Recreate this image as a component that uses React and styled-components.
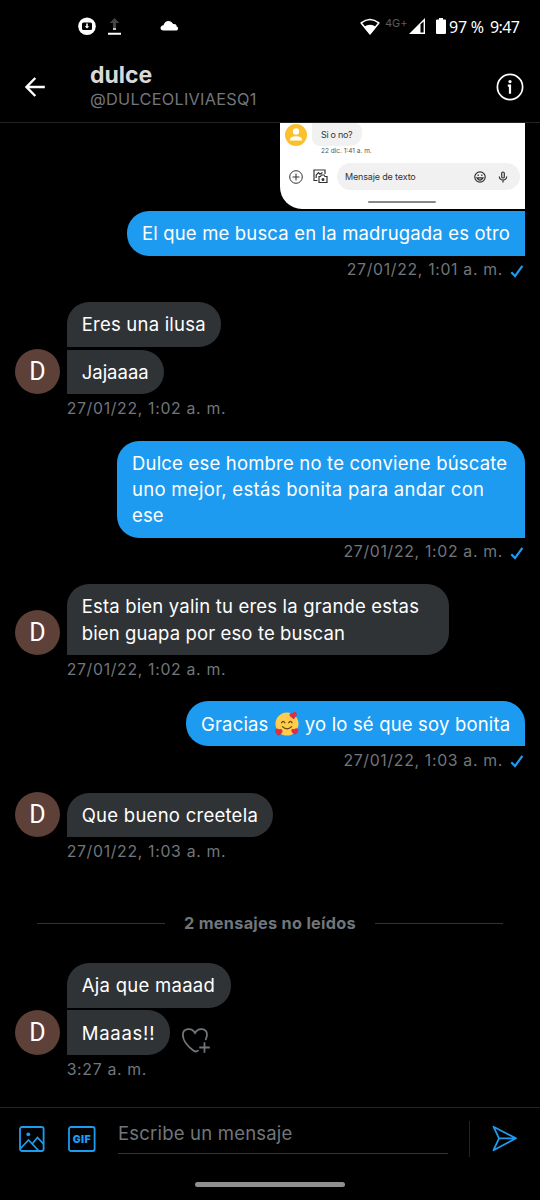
import React from "react";
import styled, { createGlobalStyle } from "styled-components";

// Data
const groups = [
  {
    id: 1,
    mine: true,
    attachment: true,
    time: "27/01/22, 1:01 a. m.",
    messages: [
      { lines: [{ text: "El que me busca en la madrugada es otro", track: 0.16 }], width: 398 },
    ],
  },
  {
    id: 2,
    time: "27/01/22, 1:02 a. m.",
    messages: [
      { lines: [{ text: "Eres una ilusa", track: 0.22 }], width: 154 },
      { lines: [{ text: "Jajaaaa", track: 0 }], width: 97 },
    ],
  },
  {
    id: 3,
    mine: true,
    time: "27/01/22, 1:02 a. m.",
    messages: [
      {
        lines: [
          { text: "Dulce ese hombre no te conviene búscate", track: 0.19 },
          { text: "uno mejor, estás bonita para andar con", track: 0.3 },
          { text: "ese", track: 0.1 },
        ],
        width: 408,
      },
    ],
  },
  {
    id: 4,
    time: "27/01/22, 1:02 a. m.",
    messages: [
      {
        lines: [
          { text: "Esta bien yalin tu eres la grande estas", track: 0.18 },
          { text: "bien guapa por eso te buscan", track: 0.12 },
        ],
        width: 382,
      },
    ],
  },
  {
    id: 5,
    mine: true,
    time: "27/01/22, 1:03 a. m.",
    messages: [
      {
        lines: [{ text: "Gracias ", after: " yo lo sé que soy bonita", track: 0.17 }],
        width: 339,
      },
    ],
  },
  {
    id: 6,
    time: "27/01/22, 1:03 a. m.",
    messages: [{ lines: [{ text: "Que bueno creetela", track: 0.26 }], width: 206 }],
  },
];

const unread = {
  id: 7,
  time: "3:27 a. m.",
  messages: [
    { lines: [{ text: "Aja que maaad", track: 0.28 }], width: 164 },
    { lines: [{ text: "Maaas!!", track: 0.75 }], width: 103, react: true },
  ],
};

// Icons
const LoveFace = () => (
  <Emoji viewBox="0 0 24 24" role="img" aria-label="🥰">
    <circle cx="12" cy="12" r="11.5" fill="#ffcc4d" />
    <path
      d="M6.6 10.7q1.6-2.6 3.2 0M13.8 10.7q1.6-2.6 3.2 0M7.4 14.6q4.6 4.6 9.2 0"
      fill="none"
      stroke="#664500"
      strokeWidth="1.3"
      strokeLinecap="round"
    />
    <path
      d="M18.6 7.3 15 4.2C13.4 2.4 15.6-.2 17.7 1.5 18.6-.8 22.2-.2 21.8 2.5 21.5 4.3 20 6 18.6 7.3Z"
      fill="#dd2e44"
    />
    <path
      d="M3.3 23.8C1.6 22.3.4 20.7.1 18.9-.2 16.5 2.8 15.6 4 17.6 5.8 16.2 8.3 18 7.3 20.2 6.5 21.8 5 23 3.3 23.8Z"
      fill="#dd2e44"
    />
    <path
      d="M20.3 22.6C18.3 21.7 16.9 20.7 16.4 19.2 15.8 17.2 18.2 16 19.5 17.5 20.4 15.6 23.3 16.1 23.3 18.2 23.2 20 21.9 21.5 20.3 22.6Z"
      fill="#dd2e44"
    />
  </Emoji>
);

const Tick = () => (
  <svg width="14" height="14" viewBox="0 0 14 14" fill="none">
    <path d="M1.3 8.3 5 12.1 12.4 1.8" stroke="#1d9bf0" strokeWidth="2.2" />
  </svg>
);

const HeartPlus = () => (
  <svg width="28" height="25" viewBox="1.3 2 28.4 25.2" fill="none" stroke="#71767b" strokeWidth="1.8">
    <path
      d="M17.5 24.9C16 26.2 14.5 26 12.8 24.7 8 21.3 2.2 15 2.2 9 2.2 2 11 1 14.5 7 18 1 26.8 2 26.6 9 26.5 10.8 26 12.2 25.4 13.5"
      strokeLinecap="round"
    />
    <path d="M24.1 16.5V27M18.8 21.7H29.5" />
  </svg>
);

const StatusIcons = () => (
  <svg width="110" height="22" viewBox="0 0 110 22">
    <circle cx="9" cy="10.2" r="8.8" fill="#fff" />
    <rect x="4" y="6.4" width="10" height="7.6" rx="1.5" fill="#000" />
    <path d="M8.2 7.6h1.6v2.6h1.5L9 12.6 6.7 10.2h1.5z" fill="#fff" />
    <path d="M36.500 2 41.300 7H38v5h-3V7h-3.300z" fill="#444" />
    <path d="M35 12.300h3v1.500h-3zM30 16.800h13v2H30z" fill="#fff" />
    <path
      d="M85.500 14.500C81.500 14.500 81.500 9.700 85.500 9.200 86.700 4.300 92.500 3.200 95.200 8 97.800 7.600 98.700 9.300 98.700 10.400 101 11.500 100.300 14.500 98 14.500Z"
      fill="#fff"
    />
  </svg>
);

const Wifi = () => (
  <svg width="20" height="18" viewBox="0 0 20 18">
    <path
      d="M10 15.800 1.200 4.900Q10-2 18.800 4.900Z"
      fill="none"
      stroke="#fff"
      strokeWidth="1.600"
      strokeLinejoin="round"
    />
    <path d="M10 16.500 3.900 9Q10 4.300 16.100 9Z" fill="#fff" />
  </svg>
);

const Signal = () => (
  <svg width="17" height="17" viewBox="0 0 17 17">
    <path d="M0 16 16 0v16z" fill="#fff" />
    <path d="M11.500 6.300 14.600 3.400v11.100h-3.100z" fill="#000" />
  </svg>
);

const Battery = () => (
  <svg width="10" height="16" viewBox="0 0 10 16">
    <path d="M3 0h4v1.500h2q1 0 1 1V15q0 1-1 1H1q-1 0-1-1V2.500q0-1 1-1h2z" fill="#fff" />
  </svg>
);

const BackArrow = () => (
  <svg width="20" height="20" viewBox="0 0 20 20" fill="none" stroke="#fff" strokeWidth="2.400">
    <path d="M19.800 10H1.700M10.300 1 1.500 10l8.800 9" />
  </svg>
);

const Info = () => (
  <svg width="28" height="28" viewBox="0 0 28 28">
    <circle cx="14" cy="14" r="12.600" fill="none" stroke="#fff" strokeWidth="1.700" />
    <circle cx="14" cy="8.600" r="1.600" fill="#fff" />
    <path d="M11.800 12.700H14v8" fill="none" stroke="#fff" strokeWidth="2.200" />
  </svg>
);

const Photo = () => (
  <svg width="26" height="26" viewBox="0 0 26 26" fill="none" stroke="#1d9bf0" strokeWidth="1.800">
    <rect x="1" y="1" width="23.600" height="24" rx="2" />
    <circle cx="9.300" cy="8.300" r="1.900" fill="#1d9bf0" stroke="none" />
    <path d="M1.500 22.500 9.500 14l10 10.500M13.500 17.500l5-6 6 6.500" />
  </svg>
);

const Gif = () => (
  <svg width="28" height="26" viewBox="0 0 28 26">
    <rect x="1" y="1" width="25.600" height="24" rx="2" fill="none" stroke="#1d9bf0" strokeWidth="1.800" />
    <text
      x="13.800"
      y="16.500"
      textAnchor="middle"
      fontFamily="Inter, sans-serif"
      fontWeight="900"
      fontSize="10.500"
      letterSpacing=".4"
      fill="#1d9bf0"
    >
      GIF
    </text>
  </svg>
);

const Send = () => (
  <svg width="26" height="27" viewBox="0 0 26 27" fill="none" stroke="#1d9bf0" strokeWidth="1.800">
    <path d="M1.500 1.700 24 13.300 1.500 25.200 7 13.300ZM7 13.300h17" strokeLinejoin="round" />
  </svg>
);

// Cropped picture at the top of the thread
const Attachment = () => (
  <Shot>
    <ShotTop>
      <ShotAvatar viewBox="0 0 22 22">
        <circle cx="11" cy="11" r="11" fill="#fbc02d" />
        <circle cx="11" cy="7.500" r="3.200" fill="#fff" />
        <path d="M4.800 16.500Q5 12.300 11 12.300t6.200 4.200z" fill="#fff" />
      </ShotAvatar>
      <div>
        <ShotBubble>Si o no?</ShotBubble>
        <ShotDate>22 dic. 1:41 a. m.</ShotDate>
      </div>
    </ShotTop>
    <ShotBar>
      <svg width="14" height="14" viewBox="0 0 14 14" fill="none" stroke="#333">
        <circle cx="7" cy="7" r="6.300" />
        <path d="M7 3.500v7M3.500 7h7" />
      </svg>
      <svg width="15" height="15" viewBox="0 0 15 15" fill="none" stroke="#333" strokeWidth="1.200">
        <path d="M4.500 11.500H1V1h11v4M3.200 9V6l2.300-2.300 1.500 1.500L9.500 3.500" />
        <path d="M6 7.500h1.500l1-1.500h2.500l1 1.500H14v6H6z" />
        <circle cx="10" cy="10.400" r=".9" fill="#333" />
      </svg>
      <ShotField>
        <span>Mensaje de texto</span>
        <svg width="12" height="12" viewBox="0 0 12 12" fill="none" stroke="#333" strokeWidth="1.200">
          <circle cx="6" cy="6" r="5.200" />
          <path d="M3 6.800q3 4.500 6 0z" />
          <path d="M4.200 3.500v1.500M7.800 3.500v1.500" />
        </svg>
        <svg width="10" height="12" viewBox="0 0 10 12" fill="none" stroke="#333" strokeWidth="1.200">
          <rect x="3.700" y="1" width="2.600" height="6" rx="1.300" />
          <path d="M1.300 5.500q.2 3.500 3.700 3.500t3.700-3.500M5 9v2.500" />
        </svg>
      </ShotField>
    </ShotBar>
    <ShotHandle />
  </Shot>
);

const MessageGroup = ({ group }) => {
  const { mine, messages, time, attachment } = group;
  return (
    <Group $mine={mine}>
      {attachment && <Attachment />}
      {messages.map((message, index) => (
        <Row key={message.lines[0].text}>
          {!mine && (index === messages.length - 1 ? <Avatar>D</Avatar> : <AvatarSpace />)}
          <Bubble $mine={mine} $first={index === 0 && !attachment} $width={message.width}>
            {message.lines.map((line) => (
              <Line key={line.text} $track={line.track}>
                {line.text}
                {line.after && <LoveFace />}
                {line.after}
              </Line>
            ))}
          </Bubble>
          {message.react && (
            <ReactButton aria-label="Reaccionar">
              <HeartPlus />
            </ReactButton>
          )}
        </Row>
      ))}
      <Meta $mine={mine}>
        <span>{time}</span>
        {mine && <Tick />}
      </Meta>
    </Group>
  );
};

const App = () => {
  return (
    <>
      <GlobalStyle />
      <Screen>
        <StatusBar>
          <StatusIcons />
          <StatusRight>
            <Wifi />
            <Network>4G+</Network>
            <Signal />
            <BatteryBox>
              <Battery />
            </BatteryBox>
            <Percent>97 %</Percent>
            <Clock>9:47</Clock>
          </StatusRight>
        </StatusBar>
        <Header>
          <BackArrow />
          <Who>
            <Name>dulce</Name>
            <Handle>@DULCEOLIVIAESQ1</Handle>
          </Who>
          <Info />
        </Header>
        <Thread>
          {groups.map((group) => (
            <MessageGroup key={group.id} group={group} />
          ))}
          <Divider>
            <span>2 mensajes no leídos</span>
          </Divider>
          <MessageGroup group={unread} />
        </Thread>
        <Composer>
          <Photo />
          <Gif />
          <Field>Escribe un mensaje</Field>
          <SendBox>
            <Send />
          </SendBox>
        </Composer>
        <HomeBar />
      </Screen>
    </>
  );
};

const GlobalStyle = createGlobalStyle`
  * {
    box-sizing: border-box;
  }
  body {
    margin: 0;
    background: #000;
    font-family: Inter, "Liberation Sans", sans-serif;
  }
  svg {
    display: block;
    flex-shrink: 0;
  }
`;

const Screen = styled.div`
  display: flex;
  flex-direction: column;
  width: 540px;
  height: 1200px;
  overflow: hidden;
  background: #000;
  color: #fff;
`;

const StatusBar = styled.div`
  display: flex;
  justify-content: space-between;
  height: 52px;
  padding: 16px 20px 0 78px;
`;

const StatusRight = styled.div`
  display: flex;
  align-items: center;
  height: 21px;
  font-family: "Noto Sans", sans-serif;
  font-size: 16px;
  white-space: nowrap;
`;

const Network = styled.span`
  width: 22px;
  margin: -7px 2px 0 5px;
  font-family: Inter, sans-serif;
  font-size: 11px;
  color: #5c5c5c;
`;

const BatteryBox = styled.div`
  margin: -1px 0 0 10px;
`;

const Percent = styled.span`
  width: 35px;
  margin-left: 3px;
  letter-spacing: -0.2px;
`;

const Clock = styled.span`
  width: 30px;
  margin-left: 6px;
  letter-spacing: -0.6px;
`;

const Header = styled.header`
  display: flex;
  align-items: center;
  height: 71px;
  padding: 0 16px 0 25px;
  border-bottom: 1px solid #202327;
`;

const Who = styled.div`
  flex: 1;
  padding: 0 0 2px 45px;
`;

const Name = styled.div`
  font-size: 23px;
  font-weight: 700;
  line-height: 27px;
  color: #d9d9d9;
`;

const Handle = styled.div`
  font-size: 16.3px;
  line-height: 21px;
  letter-spacing: 0.28px;
  color: #71767b;
`;

const Thread = styled.main`
  display: flex;
  flex-direction: column;
  height: 984px;
  flex-shrink: 0;
`;

const Group = styled.section`
  display: flex;
  flex-direction: column;
  align-items: ${({ $mine }) => ($mine ? "flex-end" : "flex-start")};
  gap: 2.5px;
  padding: 0 15px;
`;

const Row = styled.div`
  display: flex;
  align-items: flex-end;
`;

const Avatar = styled.div`
  width: 45px;
  height: 45px;
  margin-right: 6.7px;
  border-radius: 50%;
  background: #5d4037;
  font-family: Roboto, sans-serif;
  font-size: 25px;
  line-height: 46px;
  text-align: center;
`;

const AvatarSpace = styled.div`
  width: 51.7px;
`;

const Bubble = styled.div`
  width: ${({ $width }) => $width}px;
  padding: 9.25px 15px;
  border-radius: ${({ $mine, $first }) => {
    const joined = $first ? "22px" : "0";
    return $mine ? `22px ${joined} 0 22px` : `${joined} 22px 22px 0`;
  }};
  background: ${({ $mine }) => ($mine ? "#1d9bf0" : "#2f3336")};
`;

const Line = styled.div`
  height: 26.25px;
  font-size: 18.5px;
  line-height: 26.25px;
  letter-spacing: ${({ $track }) => $track}px;
  white-space: pre;
`;

const Emoji = styled.svg`
  && {
    display: inline-block;
  }
  width: 24px;
  height: 24px;
  margin: 0 0.5px 0 1px;
  vertical-align: -5px;
`;

const ReactButton = styled.button`
  margin: 0 0 2px 12px;
  padding: 0;
  border: 0;
  background: none;
`;

const Meta = styled.div`
  display: flex;
  align-items: flex-start;
  gap: 7px;
  height: 43.8px;
  padding-left: ${({ $mine }) => ($mine ? 0 : "51.7px")};
  font-size: 15.8px;
  line-height: 23.4px;
  letter-spacing: 0.68px;
  color: #71767b;
  white-space: nowrap;
  svg {
    margin: 5.3px 1px 0 0;
  }
`;

const Divider = styled.div`
  display: flex;
  align-items: center;
  gap: 19px;
  height: 79.2px;
  padding: 0 37px;
  font-size: 16.3px;
  font-weight: 700;
  letter-spacing: 0.28px;
  color: #71767b;
  white-space: nowrap;
  &::before,
  &::after {
    content: "";
    flex: 1;
    height: 1px;
    background: #2f3336;
  }
`;

const Shot = styled.div`
  width: 245px;
  height: 85.5px;
  overflow: hidden;
  border-radius: 0 0 0 22px;
  background: #fff;
  color: #333;
`;

const ShotTop = styled.div`
  display: flex;
  height: 39px;
  padding-left: 5px;
`;

const ShotAvatar = styled.svg`
  width: 22px;
  height: 22px;
  margin: 1px 5px 0 0;
`;

const ShotBubble = styled.div`
  width: 50px;
  height: 23px;
  padding-left: 9px;
  border-radius: 0 8px 12px 8px;
  background: #f1f1f1;
  font-size: 9px;
  line-height: 23px;
  letter-spacing: -0.3px;
`;

const ShotDate = styled.div`
  padding-left: 9px;
  font-size: 6.5px;
  line-height: 11px;
  color: #555;
`;

const ShotBar = styled.div`
  display: flex;
  align-items: center;
  gap: 10px;
  height: 29px;
  padding: 0 5px 0 9px;
`;

const ShotField = styled.div`
  display: flex;
  flex: 1;
  align-items: center;
  height: 27px;
  margin-left: -1px;
  padding: 0 12px 0 8px;
  border-radius: 14px;
  background: #f1f1f1;
  font-size: 9px;
  letter-spacing: -0.15px;
  span {
    flex: 1;
  }
  svg + svg {
    margin-left: 12px;
  }
`;

const ShotHandle = styled.div`
  width: 68px;
  height: 2px;
  margin: 10px 0 0 88px;
  border-radius: 1px;
  background: #888;
`;

const Composer = styled.footer`
  display: flex;
  align-items: center;
  height: 62px;
  padding-left: 18.5px;
  border-top: 1px solid #202327;
  svg + svg {
    margin-left: 23px;
  }
`;

const Field = styled.div`
  width: 330px;
  height: 37px;
  margin: -6px 0 0 22.5px;
  border-bottom: 1px solid #333639;
  font-size: 18.5px;
  line-height: 32px;
  letter-spacing: 0.2px;
  color: #71767b;
`;

const SendBox = styled.div`
  display: flex;
  align-items: center;
  height: 36px;
  margin-left: 21px;
  padding-left: 22px;
  border-left: 1px solid #202327;
`;

const HomeBar = styled.div`
  width: 150px;
  height: 5px;
  margin: 13px auto 0;
  border-radius: 3px;
  background: #8f8f8f;
`;

export default App;
